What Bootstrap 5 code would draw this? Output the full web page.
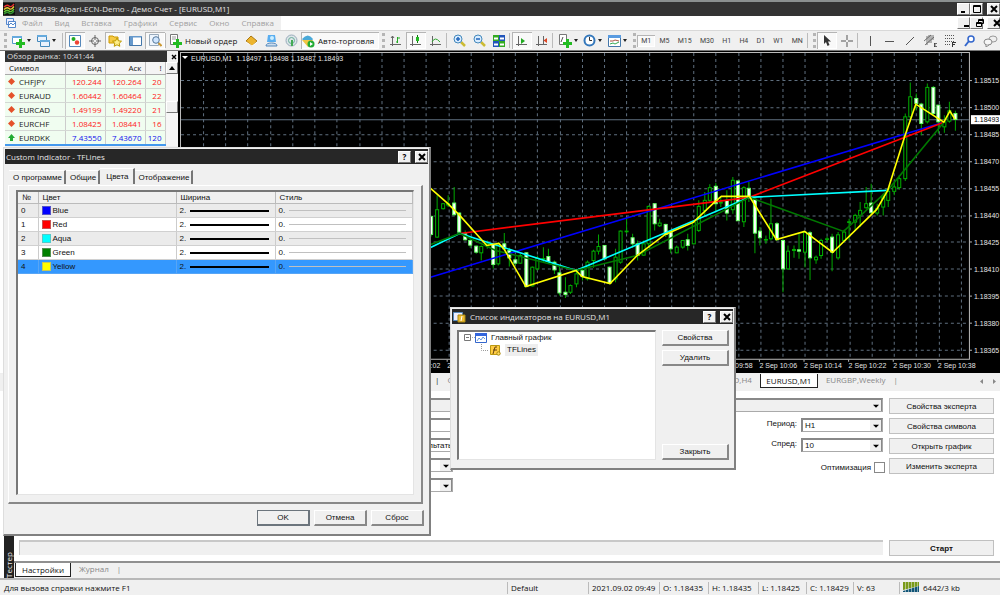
<!DOCTYPE html>
<html lang="ru">
<head>
<meta charset="utf-8">
<meta name="viewport" content="width=device-width, initial-scale=1">
<title>60708439: Alpari-ECN-Demo - Демо Счет - [EURUSD,M1]</title>
<link href="https://cdn.jsdelivr.net/npm/bootstrap@5.3.0/dist/css/bootstrap.min.css" rel="stylesheet">
<style>
:root{--face:#f0f0f0;--dark:#333;--ui:"Open Sans","Noto Sans",sans-serif;--dlg:"Liberation Sans",Arial,sans-serif}
body{font:8px/12px var(--ui);color:#111;background:#fff;min-height:100vh;position:relative;overflow-x:hidden}
button,input,select{font:inherit;color:inherit;border-radius:0}
button{padding:0;background:none;border:0;white-space:nowrap}
svg{display:block;flex:none}
.titlebar{height:16px;margin-left:3px;background:var(--dark);color:#e4e4e4;border-top:2px solid #8b9090}
.winbtn{width:13px;height:12px;background:#f0f0f0;border:1px solid #fff;border-right-color:#777;border-bottom-color:#777;color:#000;display:flex;align-items:center;justify-content:center}
.menubar{height:14px}
.menubar nav{background:var(--face);width:281px;padding-left:6px;gap:12px}
.menubar a{color:#a0a0a0;text-decoration:none}
.menubar svg{margin-right:-6px}
.tools{height:21px;background:var(--face);border-top:1px solid #d8d8d8;border-bottom:1px solid #777;padding-left:1px}
.tb{width:20px;height:17px;display:flex;align-items:center;justify-content:center;flex:none}
.tb-drop{width:25px;gap:2px}
.tb-drop::after{content:"";border:2px solid transparent;border-top:3px solid #222;border-bottom:0}
.pressed{background:#f9f9f9;box-shadow:inset 1px 1px #b5b5b5,inset -1px -1px #fff}
.divide{width:3px;height:15px;flex:none;border-left:1px solid #bbb}
.grip{width:6px;height:15px;flex:none;border-right:3px dotted #b5b5b5;margin-right:1px}
.tb-text{gap:3px;height:17px;display:flex;align-items:center;flex:none}
.neworder{width:73px}
.autotrade{width:78px}
.periods{width:175px;font:7px/12px Roboto,sans-serif;color:#444}
.watch{width:173px;margin-left:5px;background:var(--face)}
.watch-title{height:11px;line-height:10px;background:var(--dark);color:#ddd;padding-left:2px;width:162px}
.watch table{width:160px;table-layout:fixed;border-collapse:collapse}
.watch th{height:12px;font-weight:400;padding:0 3px 0 4px;border-right:1px solid #bbb;border-bottom:1px solid #aaa;background:#f4f4f4}
.watch td{height:14px;line-height:13px;padding:0 3px 0 0;border-right:1px solid #ccc;border-bottom:1px solid #d4d8d4;background:#f0fdf0;text-align:right;color:#f22}
.watch td:first-child{text-align:left;color:#222;padding-left:3px}
.watch tr.up td{color:#11e;border-bottom:2px solid #49e}
.watch tr.up td:first-child{color:#222}
.scroller{width:12px;background:#f6f6f6}
.thumb{margin-top:27px}
.chartbox{background:#000;min-width:0}
.plot{width:100%;height:322px;font:7px "Liberation Sans",sans-serif;fill:#e4e4e4}
.sheets{height:18px;background:var(--face);border-top:1px solid #eee;color:#888;padding-left:431px}
.sheets .on{background:#fff;color:#111;border:1px solid #222;border-top:0;height:14px;width:58px;flex:none}
.sheet-nav{margin:5px 3px 0 81px}
.tester{font:8px/12px var(--dlg)}
.strip{width:10px;background:#222;color:#eee;margin-left:4px;writing-mode:vertical-rl;transform:rotate(180deg);font:8px/10px var(--ui)}
.tester-form{display:grid;gap:6px;padding:7px 6px 0 5px}
.tester-form>div{height:14px}
.w-side{width:105px;flex:none}
.flatbtn{background:var(--face);border:1px solid #c0c0c0;height:16px;line-height:13px;text-align:center;color:#111}
.combo+.flatbtn,.progressbar+.flatbtn{margin-left:6px}
.combo{appearance:none;height:14px;border:1px solid #aaa;border-top:2px solid #888;border-left:2px solid #888;padding:0 2px;line-height:10px;background:#fff url("data:image/svg+xml,%3Csvg xmlns='http://www.w3.org/2000/svg' width='12' height='12'%3E%3Cpath fill='%23f0f0f0' d='M0 0h12v12H0z'/%3E%3Cpath d='M0 11.500h11.500V0' fill='none' stroke='%23888'/%3E%3Cpath d='M3 5h6L6 8z'/%3E%3C/svg%3E") right center no-repeat}
.combo.off{background-color:var(--face)}
.period-combo{width:82px}
.form-name{width:234px;flex:none}
.mid-combo{width:200px}
.wide-combo{width:300px}
.tick{appearance:none;width:11px;height:11px;border:1px solid #888;background:#fff;margin:0 4px 0 3px}
.progress-row{padding:0 6px 5px 5px}
.progressbar{height:15px;background:var(--face);border-top:2px solid #c8c8c8;border-left:1px solid #c8c8c8}
.lower-tabs{height:17px;background:var(--face);border-top:2px solid #909090;color:#888;font:8px/12px var(--ui)}
.lower-tabs .on{background:#fff;border:1px solid #222;border-top:0;width:56px;height:14px;color:#111;margin-left:1px}
.status{height:17px;background:var(--face);border-top:2px solid #b8b8b8}
.status>span{border-left:1px solid #bbb;padding-left:3px;height:12px;flex:none;white-space:nowrap}
.win{position:absolute;background:var(--face);border:1px solid #ddd;border-right:2px solid #808080;border-bottom:2px solid #808080;padding:1px;font:8px/12px var(--dlg)}
.win-title{background:#272727;color:#e4e4e4;height:15px;padding-left:1px;font:8px/13px var(--ui)}
.rbtn{background:var(--face);height:16px;line-height:12px;border:1px solid #fff;border-right:2px solid #888;border-bottom:2px solid #888;text-align:center}
.dlg-btn{width:53px}
.dlg-foot{padding:6px 3px 7px 0}
.props{left:3px;top:147px;width:428px}
.tabs-row{margin:6px 8px 0 4px;height:15px}
.tabs-row button{height:14px;border-top:1px solid #fff;border-right:2px solid #777;padding:0 2px 0 4px}
.tabs-row .on{height:16px;margin-top:-2px;padding-left:6px;padding-right:4px}
.page-frame{border:1px solid #fff;border-right:2px solid #888;border-bottom:2px solid #888;margin:0 5px 0 3px;padding:4px 7px 7px 7px}
.well-box{background:#fff;border:1px solid #e4e4e4;border-top:2px solid #777;border-left:2px solid #777}
.lines{width:100%;table-layout:fixed;border-collapse:collapse}
.lines th{font-weight:400;padding:0 5px 0 4px;line-height:11px;background:var(--face);border-right:1px solid #bbb;border-bottom:1px solid #bbb}
.lines td{height:14px;line-height:13px;padding:0 6px 0 3px;border-right:1px solid #ccc;border-bottom:1px solid #d0d0d0}
.lines tr:nth-child(odd) td{background:#ebebeb}
.lines tr.sel td{background:#3498fe;border-color:#57a5f5}
.swatch{width:9px;height:9px;border:1px solid #9998;flex:none;margin-right:2px}
.rule{height:2px;background:#000;flex:1}
.rule-thin{height:1px;background:#c0c0c0;flex:1}
.lines-well{height:305px}
.indic{left:450px;top:307px;width:286px}
.indic-body{padding:6px 4px 7px 5px}
.indic-btns{margin-left:6px;gap:4px}
.tree{height:130px;width:199px;padding:0 5px}
.tree-hit{background:#eee;padding:0 2px}
</style>
</head>
<body class="d-flex flex-column">
<header>
<div class="titlebar d-flex align-items-center">
<svg width="12" height="12" viewBox="0 0 12 12" class="me-1"><path fill="#111" d="M0 0h12v12H0z"/><g fill="none" stroke-width="1.300"><path stroke="#e33" d="M1 4q3-3 5-1t5-2"/><path stroke="#ec3" d="M1 6.500q3-3 5-1t5-2"/><path stroke="#6c3" d="M1 9q3-3 5-1t5-2"/><path stroke="#393" d="M1 11q3-3 5-1t5-2"/></g></svg>
<span class="flex-fill">60708439: Alpari-ECN-Demo - Демо Счет - [EURUSD,M1]</span>
<button class="winbtn" aria-label="Свернуть"><svg width="8" height="8"><path d="M1 6h4v2H1z"/></svg></button><button class="winbtn" aria-label="Развернуть"><svg width="8" height="8"><path d="M.5.500h7v7h-7zM0 1.500h8" fill="none" stroke="#000"/></svg></button><button class="winbtn ms-1" aria-label="Закрыть"><svg width="8" height="8"><path d="M1 1l6 6M7 1L1 7" stroke="#000" stroke-width="2"/></svg></button>
</div>
<div class="menubar d-flex">
<nav class="d-flex align-items-center">
<svg width="10" height="10" viewBox="0 0 10 10"><path d="M.5.500h7v6h-7z" fill="#eef" stroke="#58c"/><path d="M2.500 3.500h7v6h-7z" fill="#fff" stroke="#58c"/><path d="M3 7l2-2 2 2 2-2" fill="none" stroke="#58c"/></svg>
<a href="#">Файл</a><a href="#">Вид</a><a href="#">Вставка</a><a href="#">Графики</a><a href="#">Сервис</a><a href="#">Окно</a><a href="#">Справка</a>
</nav>
<div class="ms-auto d-flex align-items-center">
<button class="winbtn" aria-label="Свернуть окно"><svg width="8" height="8"><path d="M1 6h5v2H1z"/></svg></button><button class="winbtn" aria-label="Восстановить окно"><svg width="8" height="8"><path d="M2.500 3V.500h5v4H6M2 1.500h6M.5 3.500h5v4h-5zM0 4.500h6" fill="none" stroke="#000"/></svg></button><button class="winbtn ms-1" aria-label="Закрыть окно"><svg width="8" height="8"><path d="M1 1l6 6M7 1L1 7" stroke="#000" stroke-width="2"/></svg></button>
</div>
</div>
<div class="tools d-flex align-items-center" role="toolbar">
<i class="grip"></i>
<button class="tb tb-drop" aria-label="Новый график"><svg width="14" height="14" viewBox="0 0 14 14"><path d="M1.500 2.500h9v7h-9z" fill="#fff" stroke="#59c"/><path d="M1 2h10v2H1z" fill="#6ad"/><path d="M8 5h3v3h3v3h-3v3H8v-3H5V8h3z" fill="#2b2"/></svg></button>
<button class="tb tb-drop" aria-label="Профили"><svg width="14" height="14" viewBox="0 0 14 14"><path d="M1.500 1.500h9v6h-9zM4.500 6.500h9v6h-9z" fill="#eaf2fc" stroke="#48b"/><path d="M1 1h10v2H1zM4 6h10v2H4z" fill="#6ad"/></svg></button>
<i class="divide ms-1"></i>
<button class="tb pressed" aria-label="Обзор рынка"><svg width="12" height="12"><path d="M.5.500h11v11H.5z" fill="#fff" stroke="#58b"/><circle cx="4.500" cy="4" r="2" fill="#2a2"/><circle cx="8" cy="7.500" r="2.200" fill="#e43"/></svg></button>
<button class="tb" aria-label="Окно данных"><svg width="12" height="12"><circle cx="6" cy="6" r="3.500" fill="none" stroke="#666"/><path d="M6 0v5M6 7v5M0 6h5M7 6h5" stroke="#666"/></svg></button>
<button class="tb pressed" aria-label="Навигатор"><svg width="14" height="13"><path d="M1 2h4l1 1h4v6H1z" fill="#f5c945" stroke="#c90"/><path d="M9 4l1.400 2.800 3.100.400-2.300 2.100.600 3L9 10.800l-2.800 1.500.600-3L4.500 7.200l3.100-.400z" fill="#fe8" stroke="#b90"/></svg></button>
<button class="tb" aria-label="Терминал"><svg width="13" height="12"><path d="M.5 1.500h12v9H.5z" fill="#fff" stroke="#47a"/><path d="M1 1h11v1.500H1zM1 2h3v8H1z" fill="#69c"/></svg></button>
<button class="tb pressed" aria-label="Тестер стратегий"><svg width="13" height="13"><path d="M.5.500h9v11h-9z" fill="#eef5fd" stroke="#9ab"/><circle cx="7" cy="6" r="3.300" fill="#cfe6ff" stroke="#579"/><path d="M9.500 9l3 3" stroke="#c93" stroke-width="2"/></svg></button>
<i class="divide"></i>
<button class="tb-text neworder"><svg width="14" height="14" viewBox="0 0 14 14"><path d="M2.500.500h7v10h-7z" fill="#fff" stroke="#777"/><path d="M4 3h4M4 5h4" stroke="#999"/><path d="M8 5h3v3h3v3h-3v3H8v-3H5V8h3z" fill="#2b2"/></svg>Новый ордер</button>
<button class="tb" aria-label="MetaEditor"><svg width="13" height="12"><path d="M1 6l5-5 6 5-5 5z" fill="#ecb42e" stroke="#a71"/><path d="M1 7l6 4 5-4" fill="none" stroke="#fff"/></svg></button>
<button class="tb" aria-label="VPS"><svg width="13" height="13"><path d="M3 1h7l1 7H2z" fill="#5aaef0"/><circle cx="7" cy="4" r="2" fill="#cef"/><path d="M1 12q0-3 5.500-3t5.500 3z" fill="#cde" stroke="#58b"/></svg></button>
<button class="tb" aria-label="Сигналы"><svg width="13" height="13"><circle cx="6.500" cy="6.500" r="5.500" fill="#dce6e8" stroke="#9ab"/><circle cx="6.500" cy="6.500" r="3" fill="none" stroke="#6a9"/><path d="M6 6h2v6H6z" fill="#4a5"/></svg></button>
<button class="tb-text autotrade pressed"><svg width="14" height="14"><path d="M1 5q6-7 11 0l-5 7z" fill="#4aa9d8"/><path d="M1 6h11l-5 7z" fill="#f1c643"/><circle cx="10" cy="10" r="3.500" fill="#2a3"/><path d="M9 8l3 2-3 2z" fill="#fff"/></svg>Авто-торговля</button>
<i class="grip"></i>
<button class="tb" aria-label="Бары"><svg width="12" height="12"><path d="M2.500 1v10M0 9.500h11M1 3l1.500-2L4 3" fill="none" stroke="#666"/><path d="M7.500 2v6M6 7h1.500M7.500 3H10" stroke="#2a2" fill="none"/></svg></button>
<button class="tb pressed" aria-label="Свечи"><svg width="12" height="12"><path d="M2.500 1v10M0 9.500h11" stroke="#666"/><path d="M7.500 0v8" stroke="#171"/><path d="M6 2h3v4H6z" fill="#2b2"/></svg></button>
<button class="tb" aria-label="Линия"><svg width="12" height="12"><path d="M2.500 1v10M0 9.500h11" stroke="#666"/><path d="M2 7q3-6 8 0" fill="none" stroke="#3a3"/></svg></button>
<i class="divide"></i>
<button class="tb" aria-label="Увеличить"><svg width="13" height="13"><path d="M8 8l4 4" stroke="#cb3" stroke-width="2.500"/><circle cx="5" cy="5" r="4" fill="#d8ecff" stroke="#48b"/><path d="M3 5h4M5 3v4" stroke="#26b" stroke-width="1.500"/></svg></button>
<button class="tb" aria-label="Уменьшить"><svg width="13" height="13"><path d="M8 8l4 4" stroke="#cb3" stroke-width="2.500"/><circle cx="5" cy="5" r="4" fill="#d8ecff" stroke="#48b"/><path d="M3 5h4" stroke="#26b" stroke-width="1.500"/></svg></button>
<button class="tb" aria-label="Плитка"><svg width="12" height="12"><path d="M0 0h6v6H0zM6 6h6v6H6z" fill="#3a2"/><path d="M6 0h6v6H6zM0 6h6v6H0z" fill="#25b"/><path d="M1 2.500h4v2H1zM7 2.500h4v2H7zM1 8.500h4v2H1zM7 8.500h4v2H7z" fill="#fff"/></svg></button>
<i class="divide"></i>
<button class="tb pressed" aria-label="Автопрокрутка"><svg width="12" height="12"><path d="M2.500 1v10M0 9.500h11" stroke="#666"/><path d="M5 3l4 3-4 3z" fill="#2a2"/></svg></button>
<button class="tb" aria-label="Сдвиг графика"><svg width="12" height="12"><path d="M2.500 1v10M0 9.500h11M7.500 1v8" stroke="#666"/><path d="M11 3v5L7.500 5.500z" fill="#d42"/></svg></button>
<i class="divide"></i>
<button class="tb tb-drop" aria-label="Индикаторы"><svg width="14" height="14"><path d="M1.500.500h7v10h-7z" fill="#fff" stroke="#777"/><path d="M3 8l2-5" stroke="#555"/><path d="M8 5h3v3h3v3h-3v3H8v-3H5V8h3z" fill="#2b2"/></svg></button>
<button class="tb tb-drop" aria-label="Периоды"><svg width="13" height="13"><circle cx="6.500" cy="6.500" r="5" fill="#fff" stroke="#37b" stroke-width="2"/><path d="M6.500 3v3.500H9" fill="none" stroke="#333"/></svg></button>
<button class="tb tb-drop" aria-label="Шаблоны"><svg width="13" height="12"><path d="M.5.500h12v11H.5z" fill="#fff" stroke="#47a"/><path d="M0 0h13v3H0z" fill="#5a9be0"/><path d="M2 6h3l2-1 4 1" fill="none" stroke="#a54"/><path d="M2 9l3-1 2 1 4-2" fill="none" stroke="#3a5"/></svg></button>
<i class="grip"></i>
<div class="periods d-flex">
<button class="flex-fill pressed">M1</button><button class="flex-fill">M5</button><button class="flex-fill">M15</button><button class="flex-fill">M30</button><button class="flex-fill">H1</button><button class="flex-fill">H4</button><button class="flex-fill">D1</button><button class="flex-fill">W1</button><button class="flex-fill">MN</button>
</div>
<i class="divide"></i><i class="grip"></i>
<button class="tb pressed" aria-label="Курсор"><svg width="8" height="12"><path d="M1 0v9l2-2 1.500 4 2-1L5 6.500h3z" fill="#333"/></svg></button>
<button class="tb" aria-label="Перекрестие"><svg width="12" height="12"><path d="M6 0v5M6 7v5M0 6h5M7 6h5" stroke="#555"/></svg></button>
<i class="divide"></i>
<button class="tb" aria-label="Вертикальная линия"><svg width="10" height="10"><path d="M5.500 0v10" stroke="#555"/></svg></button>
<button class="tb" aria-label="Горизонтальная линия"><svg width="10" height="10"><path d="M0 5.500h9" stroke="#555"/></svg></button>
<button class="tb" aria-label="Трендовая линия"><svg width="10" height="10"><path d="M1 9l8-8" stroke="#555"/></svg></button>
<button class="tb" aria-label="Канал"><svg width="13" height="13"><path d="M0 7l7-6M1 11l9-8M3 2v9M5 1v8M7 1v8M9 1v5" stroke="#555" stroke-width=".8"/><path d="M10 12.500h3M10.500 9v4M10 9.500h3M10 11h2" stroke="#333" stroke-width=".7"/></svg></button>
<button class="tb" aria-label="Фибоначчи"><svg width="13" height="13"><path d="M1 1.500h10M1 4.500h10M1 7.500h10M1 10.500h5" stroke="#555" stroke-dasharray="1 1"/><path d="M8.500 8v5M8 8.500h4M8 10.500h3" stroke="#333"/></svg></button>
<button class="tb ms-auto" aria-label="Поиск"><svg width="12" height="12"><circle cx="7" cy="4" r="3" fill="#fff" stroke="#36c" stroke-width="1.500"/><path d="M5 6l-4 5" stroke="#36c" stroke-width="2"/></svg></button>
<button class="tb" aria-label="Сообщения"><svg width="15" height="12"><ellipse cx="10" cy="4" rx="4" ry="3" fill="#eee" stroke="#999"/><ellipse cx="5" cy="7" rx="4" ry="3" fill="#f6f6f6" stroke="#888"/><path d="M3 9v3l3-2" fill="#eee" stroke="#888"/></svg></button>
</div>
</header>

<main class="d-flex flex-column flex-fill">
<div class="d-flex">
<section class="watch flex-shrink-0">
<div class="d-flex"><div class="watch-title">Обзор рынка: 10:41:44</div><button class="ms-1" aria-label="Закрыть обзор"><svg width="6" height="6"><path d="M1 1l4 4M5 1L1 5" stroke="#000" stroke-width="1.400"/></svg></button></div>
<div class="d-flex">
<table>
<colgroup><col style="width:60px"><col style="width:40px"><col style="width:40px"><col style="width:20px"></colgroup>
<thead><tr><th>Символ</th><th class="text-end">Бид</th><th class="text-end">Аск</th><th class="text-end">!</th></tr></thead>
<tbody id="quotes"></tbody>
</table>
<div class="scroller"><button class="winbtn w-100" aria-label="Вверх"><svg width="6" height="4"><path d="M0 4l3-4 3 4z"/></svg></button><div class="winbtn thumb w-100"></div></div>
</div>
</section>
<section class="chartbox flex-fill ms-auto">
<svg class="plot" id="plot" viewBox="180 51 820 322" preserveAspectRatio="xMaxYMin slice" role="img" aria-label="EURUSD,M1"></svg>
</section>
</div>
<div class="sheets d-flex">
<span class="ms-1 text-dark">|</span><span class="ms-2">GBPUSD,H4</span><span class="ms-auto">USDCAD,H4</span>
<button class="on mx-2">EURUSD,M1</button><button class="me-2 align-self-start">EURGBP,Weekly</button><span>|</span>
<span class="sheet-nav d-flex gap-2"><svg width="5" height="6"><path d="M4 0v5L1 2.500z" fill="#888"/></svg><svg width="5" height="6"><path d="M1 0v5l3-2.500z" fill="#888"/></svg></span>
</div>
<section class="tester d-flex flex-fill">
<div class="strip">Тестер</div>
<div class="flex-fill d-flex flex-column">
<form class="tester-form" onsubmit="return false">
<div class="d-flex"><select class="combo off flex-fill" aria-label="Советник"></select><button class="flatbtn w-side">Свойства эксперта</button></div>
<div class="d-flex"><label class="form-name" for="sym">Символ:</label><select id="sym" class="combo wide-combo"></select><label class="ms-auto pe-1" for="per">Период:</label><select id="per" class="combo period-combo"><option>H1</option></select><button class="flatbtn w-side">Свойства символа</button></div>
<div class="d-flex"><label class="form-name" for="model">Модель:</label><select id="model" class="combo wide-combo"><option>Контрольные точки (очень грубый метод, результаты нельзя принимать в расчет)</option></select><label class="ms-auto pe-1" for="spr">Спред:</label><select id="spr" class="combo period-combo"><option>10</option></select><button class="flatbtn w-side">Открыть график</button></div>
<div class="d-flex"><label class="form-name" for="from">От:</label><select id="from" class="combo mid-combo"></select><label class="ms-auto pt-1" for="opt">Оптимизация</label><input id="opt" type="checkbox" class="tick mt-1"><button class="flatbtn w-side">Изменить эксперта</button></div>
<div class="d-flex"><label class="form-name" for="to">До:</label><select id="to" class="combo mid-combo"></select></div>
</form>
<div class="progress-row mt-auto d-flex"><div class="progressbar flex-fill"></div><button class="flatbtn w-side fw-bold">Старт</button></div>
<div class="lower-tabs d-flex"><button class="on">Настройки</button><button class="mx-2 align-self-start">Журнал</button><span>|</span></div>
</div>
</section>
</main>
<footer class="status d-flex align-items-center">
<div class="flex-fill ps-1">Для вызова справки нажмите F1</div>
<span style="width:81px">Default</span><span style="width:71px">2021.09.02 09:49</span><span style="width:49px">O: 1.18435</span><span style="width:50px">H: 1.18435</span><span style="width:48px">L: 1.18425</span><span style="width:47px">C: 1.18429</span><span style="width:46px">V: 63</span>
<span class="d-flex gap-1" style="width:101px"><svg width="16" height="10"><path d="M0 0h16v4L0 8z" fill="#7a9a1a"/><path d="M0 9l16-5v6H0z" fill="#157"/><path d="M2.500 0v10M5.500 0v10M8.500 0v10M11.500 0v10M14.500 0v10" stroke="#f0f0f0" opacity=".5"/></svg>6442/3 kb</span>
</footer>

<section class="win props" role="dialog" aria-label="Custom Indicator - TFLines">
<div class="win-title d-flex align-items-center"><span class="flex-fill">Custom Indicator - TFLines</span><button class="winbtn fw-bold">?</button><button class="winbtn ms-1" aria-label="Закрыть"><svg width="8" height="8"><path d="M1 1l6 6M7 1L1 7" stroke="#000" stroke-width="2"/></svg></button></div>
<div class="tabs-row d-flex"><button>О программе</button><button>Общие</button><button class="on">Цвета</button><button>Отображение</button></div>
<div class="page-frame"><div class="well-box lines-well">
<table class="lines">
<colgroup><col style="width:20px"><col style="width:138px"><col style="width:99px"><col></colgroup>
<thead><tr><th>№</th><th>Цвет</th><th>Ширина</th><th>Стиль</th></tr></thead>
<tbody id="colors"></tbody></table>
</div></div>
<div class="dlg-foot d-flex justify-content-end gap-1 pe-1"><button class="rbtn dlg-btn border-secondary">OK</button><button class="rbtn dlg-btn">Отмена</button><button class="rbtn dlg-btn">Сброс</button></div>
</section>

<section class="win indic" role="dialog" aria-label="Список индикаторов на EURUSD,M1">
<div class="win-title d-flex align-items-center"><svg width="13" height="12" class="me-1"><path d="M.5 1.500h9v8h-9z" fill="#eef" stroke="#58b"/><path d="M5 4h7v7H5z" fill="#eb3" stroke="#a81"/><path d="M8 10l1-5" stroke="#fff"/></svg><span class="flex-fill">Список индикаторов на EURUSD,M1</span><button class="winbtn fw-bold">?</button><button class="winbtn ms-1" aria-label="Закрыть"><svg width="8" height="8"><path d="M1 1l6 6M7 1L1 7" stroke="#000" stroke-width="2"/></svg></button></div>
<div class="indic-body d-flex">
<div class="well-box tree">
<div class="d-flex align-items-center"><svg width="11" height="8"><path d="M.5.500h6v6h-6zM2 3.500h3" fill="#fff" stroke="#777"/><path d="M8 3.500h3" stroke="#aaa" stroke-dasharray="1 1"/></svg><svg width="12" height="10" class="me-1"><path d="M.5.500h11v9H.5z" fill="#fff" stroke="#36c"/><path d="M0 0h12v3H0z" fill="#36d"/><path d="M2 8l2-3 2 2 2-3 2 2" fill="none" stroke="#69d"/></svg>Главный график</div>
<div class="d-flex align-items-center ps-3"><svg width="10" height="12"><path d="M1.500 0v6.500H9" fill="none" stroke="#999" stroke-dasharray="1 1"/></svg><svg width="11" height="11" class="me-1"><path d="M.5.500h9v9h-9z" fill="#fc4" stroke="#b91"/><path d="M3 9l2-7h2M3 5h4" fill="none" stroke="#641"/><circle cx="8.500" cy="8.500" r="1.700" fill="#fd6" stroke="#a81"/></svg><span class="tree-hit">TFLines</span></div>
</div>
<div class="indic-btns d-flex flex-column flex-fill"><button class="rbtn">Свойства</button><button class="rbtn">Удалить</button><button class="rbtn mt-auto">Закрыть</button></div>
</div>
</section>
<script>
const quotes=[["CHFJPY","120.244","120.264",20],["EURAUD","1.60442","1.60464",22],["EURCAD","1.49199","1.49220",21],["EURCHF","1.08425","1.08441",16],["EURDKK","7.43550","7.43670",120]];
document.getElementById("quotes").innerHTML=quotes.map((q,i)=>`<tr class="${i==4?"up":""}"><td><span class="d-flex align-items-center gap-1"><svg width="7" height="7"><path d="${i==4?"M0 4l3.500-4L7 4H5v3H2V4z":"M0 3.500L3.500 0 7 3.500 3.500 7z"}" fill="${i==4?"#2a3":"#e4512a"}"/></svg>${q[0]}</span></td><td>${q[1]}</td><td>${q[2]}</td><td>${q[3]}</td></tr>`).join("");
const colors=["Blue","Red","Aqua","Green","Yellow"];
document.getElementById("colors").innerHTML=colors.map((c,i)=>`<tr class="${i==4?"sel":""}"><td>${i}</td><td><span class="d-flex align-items-center"><i class="swatch" style="background:${c}"></i>${c}</span></td><td><span class="d-flex align-items-center gap-1">2.<i class="rule"></i></span></td><td><span class="d-flex align-items-center gap-1">0.<i class="rule-thin"></i></span></td></tr>`).join("");

// candles: x, high, low, body top, body bottom, falling
const a=[[8,165,228,168,222,1],[25,105,232,148,230],[42,128,147,130,145],[58,105,140,130,134],[75,80,165,128,163,1],[92,155,218,158,215,1],[108,210,240,220,238,1],[125,230,262,240,254,1],[141,255,280,257,275,1],[158,255,300,258,277],[175,240,265,250,256],[192,250,325,252,312,1],[209,245,315,250,310],[225,218,270,250,265,1],[242,262,318,270,292,1],[259,285,315,298,308,1],[275,280,310,285,308],[292,275,378,277,378,1],[309,318,378,320,376],[325,285,330,293,325],[342,260,305,294,296],[358,265,310,288,303,1],[375,300,340,305,328,1],[392,318,405,337,397,1],[409,350,412,395,402,1],[425,372,400,375,395],[442,325,380,340,370],[459,318,360,330,348,1],[475,300,360,305,355],[492,268,322,272,300],[509,222,282,258,272],[525,255,300,255,295,1],[542,318,372,320,368,1],[559,265,365,290,355],[575,210,310,212,305],[592,175,220,212,214],[609,220,262,232,250,1],[625,240,300,250,285,1],[642,240,285,250,284],[659,135,260,138,250],[675,130,210,130,190,1],[692,175,200,188,196],[709,190,230,192,222,1],[725,210,278,215,265,1],[742,255,278,260,277],[759,240,265,240,260],[775,220,270,238,255,1],[792,180,252,185,250],[809,120,215,138,210],[825,95,170,120,150],[842,72,125,82,120],[859,68,155,78,130,1]].map(c=>[430+c[0]/3,160+c[1]/3,160+c[2]/3,160+c[3]/3,160+c[4]/3,c[5]]);
const b=[[12,430,545,500,540],[29,450,520,465,510],[45,430,480,452,465],[62,400,455,412,450],[95,440,470,455,458],[112,420,510,450,488,1],[129,380,490,390,478],[145,390,512,392,511,1],[162,408,530,412,514],[179,395,455,414,440,1],[195,440,608,447,548,1],[212,530,585,542,562,1],[229,555,580,567,569],[245,445,570,520,565],[262,515,570,520,568,1],[279,568,725,570,655,1],[295,585,658,602,655],[312,585,622,597,600],[328,550,625,598,602,1],[345,542,650,545,605],[362,542,688,547,622,1],[379,615,640,620,628],[395,565,625,570,615],[412,558,575,565,567],[428,550,662,560,605,1],[445,545,628,553,622],[462,538,575,545,570],[479,505,570,514,516],[495,490,540,495,515],[512,455,530,480,495],[529,410,475,460,472],[545,400,490,458,487,1],[562,460,495,474,488],[579,430,495,440,470],[595,415,470,423,450],[612,395,435,410,423],[629,375,418,385,412],[645,190,392,200,385],[662,97,215,140,200],[679,130,180,145,160,1],[695,158,255,162,220,1],[712,100,220,112,215],[729,108,195,112,190,1],[745,165,250,165,215,1],[762,195,248,215,230],[779,155,218,182,213],[796,182,242,190,208,1]].slice(4).map(c=>[690+c[0]/3,50+c[1]/3,50+c[2]/3,50+c[3]/3,50+c[4]/3,c[5]]);
const lines=[["#00f","370,295 431,277 944,122"],["#f00","461,233 750,197 944,122"],["#0ff","400,262 432,247 461,233 577,270 750,197 888,190"],["#007800","400,258 432,244 461,233 497,250 577,270 638,255 750,197 844,231 888,190 944,122"],["#ff0","400,165 432,188 449,203 461,215 488,245 500,243 505,248 527,286 577,270 583,276 611,283 638,255 666,234 694,222 716,201 722,196 750,196 777,239 805,231 833,252 877,209 888,190 905,136 916,104 944,122 950,111 955,119"]];
let s='<g stroke="#5f6f7f" stroke-dasharray="3 3">';
for(let i=0;i<35;i++){const x=Math.round(205+i*22.23)+.5;s+=`<path d="M${x} 53V358"/>`}
for(let i=0;i<11;i++){const y=Math.round(80+i*26.9)+.5;s+=`<path d="M183 ${y}H969"/>`}
s+='</g><path d="M182.500 358V52.500H969.500V358.500H182.500" fill="none" stroke="#bbb"/><path d="M183 119.500H969" stroke="#5f6f7f"/>';
for(const[x,h,l,t,q,d]of a.concat(b)){const m=Math.round(x-.5)+.5;s+=`<path d="M${m} ${h}V${l}" stroke="#00a800"/><rect x="${m-1.5}" y="${t}" width="3" height="${Math.max(q-t,.5)}" fill="${d?"#fff":"#000"}" stroke="${d?"#6f6":"#00b000"}"/>`}
for(const[c,p]of lines)s+=`<polyline points="${p}" fill="none" stroke="${c}" stroke-width="1.600"/>`;
s+='<path d="M184 56h6l-3 3z" fill="#fff"/><text x="193" y="61">EURUSD,M1&#160; 1.18497 1.18498 1.18487 1.18493</text>';
["515","500","485","470","455","440","425","410","395","380","365"].forEach((p,i)=>{const y=80+i*26.9;s+=`<path d="M970 ${Math.round(y)+.5}h2" stroke="#bbb"/><text x="974" y="${y+3}">1.18${p}</text>`});
s+='<rect x="971" y="115" width="29" height="9" fill="#fff"/><text x="974" y="122" fill="#000">1.18493</text>';
const start=9*60+2;
for(let i=0;i<13;i++){const m=start+i*8,x=404+i*44.5;s+=`<path d="M${x} 359v2" stroke="#bbb"/><text x="${x}" y="367">2 Sep ${String(m/60|0).padStart(2,"0")}:${String(m%60).padStart(2,"0")}</text>`}
document.getElementById("plot").innerHTML=s;
</script>
<script src="https://cdn.jsdelivr.net/npm/bootstrap@5.3.0/dist/js/bootstrap.bundle.min.js"></script>
</body>
</html>
